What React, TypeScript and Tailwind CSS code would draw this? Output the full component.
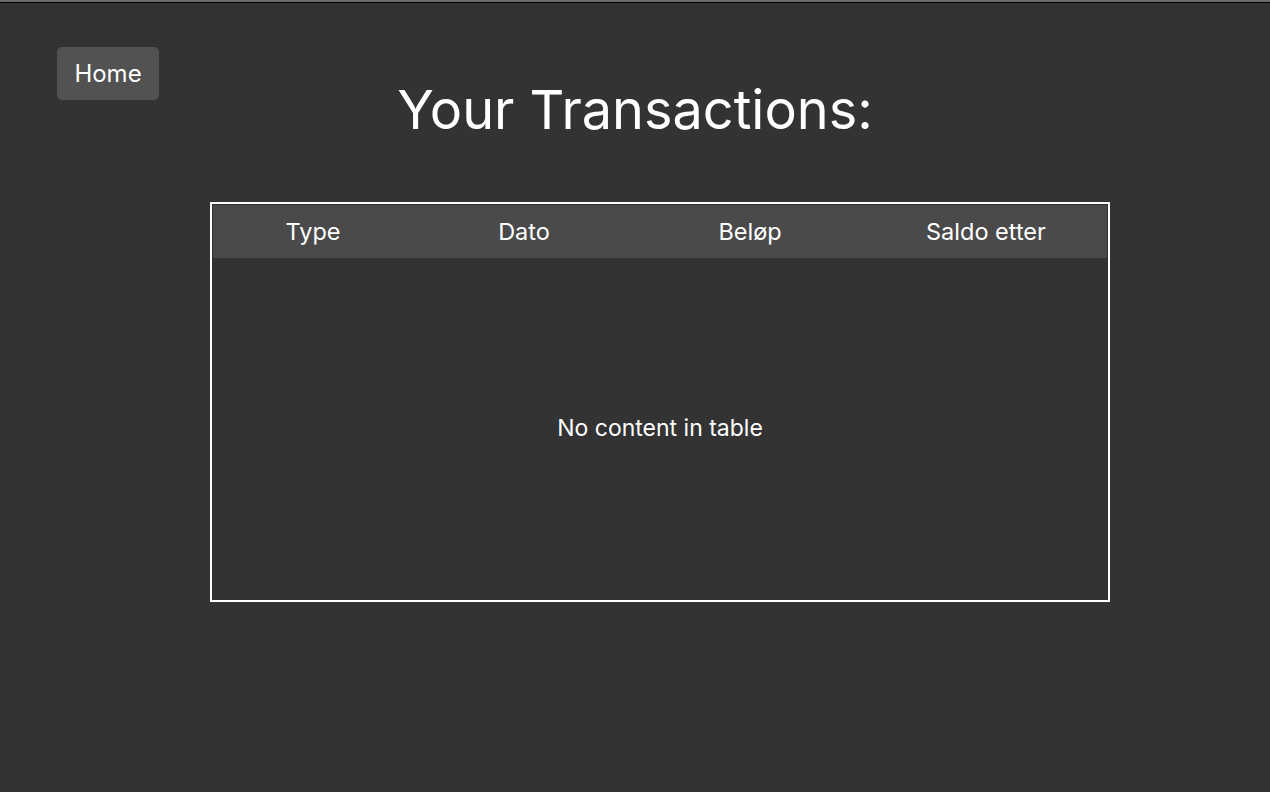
export default function App() {
  const columns = [
    { label: 'Type', width: 'w-[200px]' },
    { label: 'Dato', width: 'w-[222px]' },
    { label: 'Beløp', width: 'w-[230px]' },
    { label: 'Saldo etter', width: 'w-[242px]' },
  ]

  return (
    <div className="h-[792px] w-full bg-[#333333] text-white font-['Inter',sans-serif] flex flex-col">
      {/* window edge */}
      <div className="h-[2px] bg-[#6b6b6b]" />
      <div className="h-px bg-black" />

      <div className="relative flex flex-col items-center">
        <button className="absolute left-[57px] top-[44px] w-[102px] h-[53px] rounded-[5px] bg-[#525252] text-[24px] text-white">
          Home
        </button>

        <h1 className="mt-[72px] text-[54px] leading-[70px] font-normal">
          Your Transactions:
        </h1>

        {/* Transactions table */}
        <div className="mt-[57px] ml-[50px] w-[900px] h-[400px] border-2 border-white p-px flex flex-col">
          <div className="flex h-[53px] bg-[#4a4a4a] items-center text-[23.5px]">
            {columns.map((c) => (
              <div key={c.label} className={`${c.width} text-center`}>
                {c.label}
              </div>
            ))}
          </div>
          <div className="flex-1 flex items-center justify-center text-[23px] pb-[1px]">
            No content in table
          </div>
        </div>
      </div>
    </div>
  )
}
